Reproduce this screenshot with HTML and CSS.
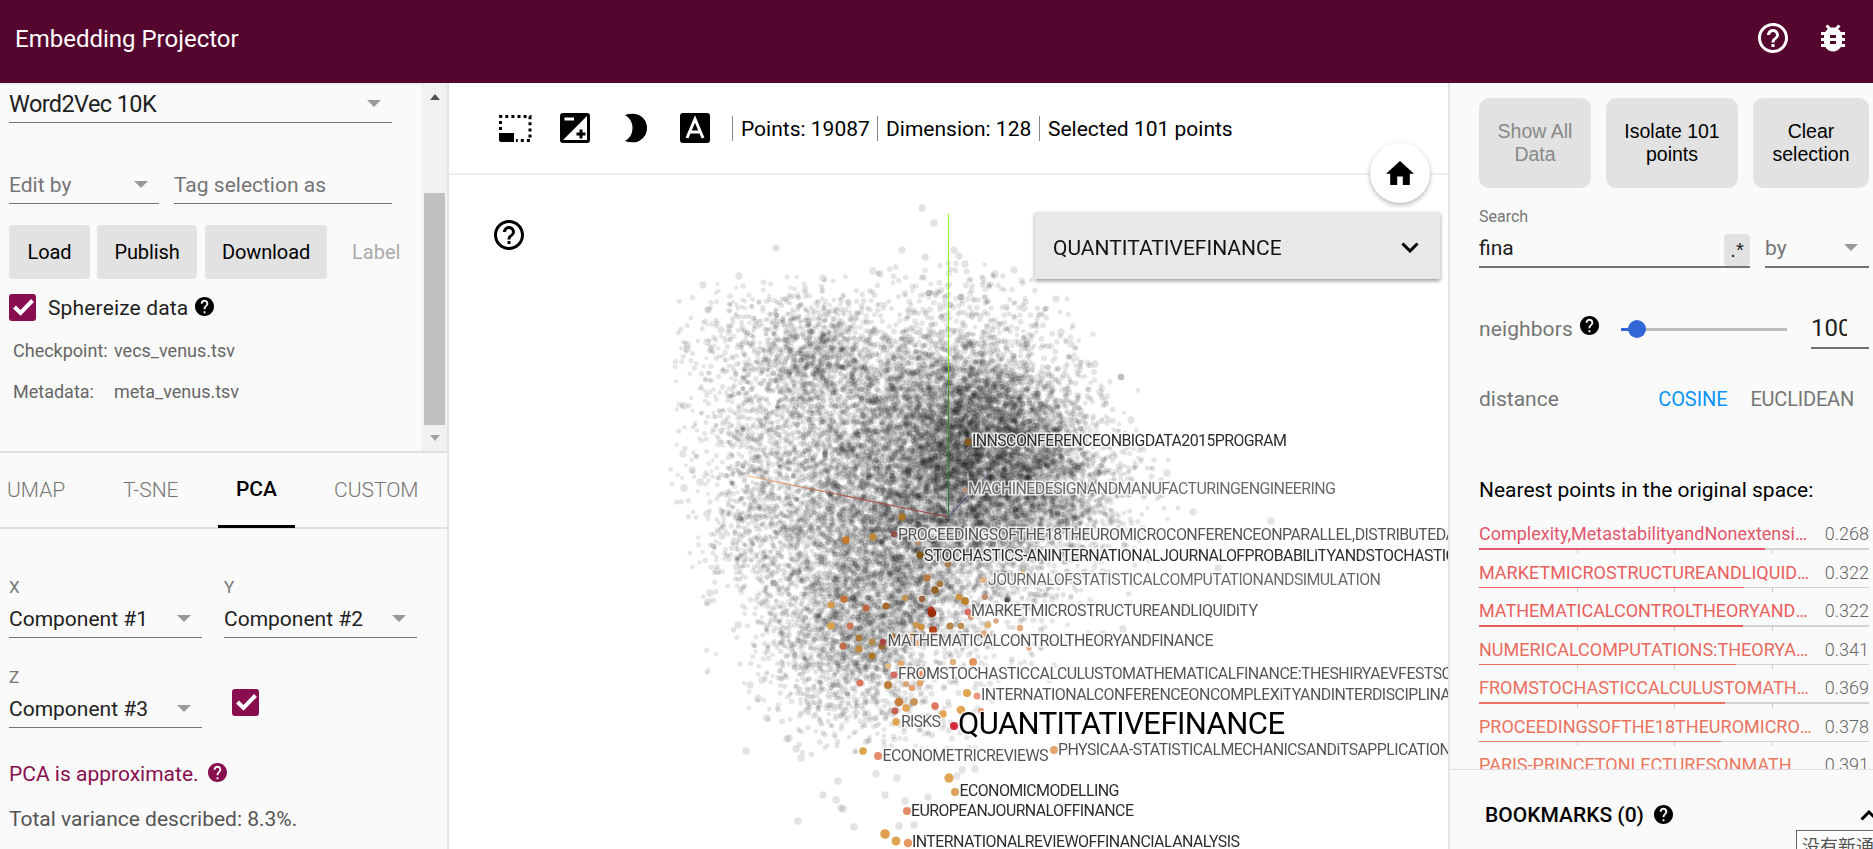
FILE: index.html
```html
<!DOCTYPE html>
<html lang="en">
<head>
<meta charset="utf-8">
<title>Embedding Projector</title>
<link rel="stylesheet" href="styles.css">
</head>
<body>
<svg class="defs" aria-hidden="true">
  <symbol id="help" viewBox="2 2 20 20"><path d="M12 2C6.48 2 2 6.48 2 12s4.48 10 10 10 10-4.48 10-10S17.52 2 12 2zm1 17h-2v-2h2v2zm2.07-7.75l-.9.92C13.45 12.9 13 13.5 13 15h-2v-.5c0-1.1.45-2.1 1.17-2.83l1.24-1.26c.37-.36.59-.86.59-1.41 0-1.1-.9-2-2-2s-2 .9-2 2H8c0-2.21 1.79-4 4-4s4 1.79 4 4c0 .88-.36 1.68-.93 2.25z"/></symbol>
  <symbol id="help-outline" viewBox="2 2 20 20"><path d="M11 18h2v-2h-2v2zm1-16C6.48 2 2 6.48 2 12s4.48 10 10 10 10-4.48 10-10S17.52 2 12 2zm0 18c-4.41 0-8-3.59-8-8s3.59-8 8-8 8 3.59 8 8-3.590 8-8 8zm0-14c-2.210 0-4 1.790-4 4h2c0-1.100.9-2 2-2s2 .9 2 2c0 2-3 1.750-3 5h2c0-2.250 3-2.500 3-5 0-2.210-1.790-4-4-4z"/></symbol>
  <symbol id="check" viewBox="0 0 27 27"><path d="M5.500 13l6 6L23.500 6.500" fill="none" stroke="#fff" stroke-width="4"/></symbol>
</svg>
<header class="header">
  <h1 class="title">Embedding Projector</h1>
  <svg class="i30"><use href="#help-outline"/></svg>
  <svg class="bug" viewBox="0 0 24 24"><path d="M20 8h-2.810c-.45-.78-1.070-1.450-1.820-1.960L17 4.410 15.590 3l-2.170 2.170C12.960 5.060 12.490 5 12 5c-.49 0-.96.06-1.410.17L8.410 3 7 4.410l1.620 1.630C7.880 6.550 7.260 7.220 6.810 8H4v2h2.090c-.05.33-.09.66-.09 1v1H4v2h2v1c0 .34.04.67.09 1H4v2h2.810c1.040 1.790 2.970 3 5.190 3s4.150-1.210 5.190-3H20v-2h-2.090c.05-.33.09-.66.09-1v-1h2v-2h-2v-1c0-.34-.04-.67-.09-1H20V8zm-6 8h-4v-2h4v2zm0-4h-4v-2h4v2z"/></svg>
</header>
<main class="main">
  <aside class="left">
    <section class="data-pane">
      <div class="data-content">
        <div class="field dataset"><span>Word2Vec 10K</span><i class="arrow"></i></div>
        <div class="edit-row">
          <div class="field edit-by"><span>Edit by</span><i class="arrow"></i></div>
          <div class="field tag-as"><span>Tag selection as</span></div>
        </div>
        <div class="actions">
          <button class="btn load">Load</button><button class="btn publish">Publish</button><button class="btn download">Download</button><span class="label-btn">Label</span>
        </div>
        <div class="sphere"><svg class="checkbox"><use href="#check"/></svg><span>Sphereize data</span><svg class="i19"><use href="#help"/></svg></div>
        <dl class="files"><dt>Checkpoint:</dt><dd>vecs_venus.tsv</dd><dt>Metadata:</dt><dd>meta_venus.tsv</dd></dl>
      </div>
      <div class="scrollbar"><i class="up"></i><div class="thumb"></div><i class="down"></i></div>
    </section>
    <nav class="tabs"><span class="tab umap">UMAP</span><span class="tab tsne">T-SNE</span><span class="tab pca">PCA</span><span class="tab custom">CUSTOM</span></nav>
    <section class="pca-pane">
      <div class="axes">
        <div class="axis"><label>X</label><div class="field"><span>Component #1</span><i class="arrow"></i></div></div>
        <div class="axis"><label>Y</label><div class="field"><span>Component #2</span><i class="arrow"></i></div></div>
        <div class="axis"><label>Z</label><div class="field"><span>Component #3</span><i class="arrow"></i></div></div>
        <svg class="checkbox z-check"><use href="#check"/></svg>
      </div>
      <p class="approx"><span>PCA is approximate.</span><svg class="i19"><use href="#help"/></svg></p>
      <p class="variance">Total variance described: 8.3%.</p>
    </section>
  </aside>
  <section class="center">
    <div class="toolbar">
      <svg class="tool select" viewBox="0 0 34 30"><path d="M1 20h15v9H3q-2 0-2-2z"/><path d="M2.500 17V3.500H32V27.500H18" fill="none" stroke="#000" stroke-width="3" stroke-dasharray="3 3.100"/></svg>
      <svg class="tool night" viewBox="0 0 30 30"><rect width="30" height="30" rx="3"/><path d="M27 3v24H3z" fill="#fff"/><path d="M4.500 6H14" stroke="#fff" stroke-width="3"/><path d="M16.500 21h9M21 16.500v9" stroke="#000" stroke-width="3"/></svg>
      <svg class="tool moon" viewBox="0 0 23 30"><path d="M0 1.500Q3.500 0 8 0a15 15 0 0 1 0 30Q3.500 30 0 28.500a15.500 15.500 0 0 0 0-27z"/></svg>
      <svg class="tool letter" viewBox="0 0 30 30"><rect width="30" height="30" rx="3"/><path d="M7 25L15 6l8 19M10 19h10" fill="none" stroke="#fff" stroke-width="3"/></svg>
      <div class="stats"><span class="s1">Points: 19087</span><span class="s2">Dimension: 128</span><span class="s3">Selected 101 points</span></div>
    </div>
    <div class="scene">
      <canvas id="plot" width="1000" height="674"></canvas>
      <svg class="labels" viewBox="449 175 1000 674" id="labels">
        <text x="972" y="446" textLength="315">INNSCONFERENCEONBIGDATA2015PROGRAM</text>
        <text x="968" y="494" textLength="368" class="dim">MACHINEDESIGNANDMANUFACTURINGENGINEERING</text>
        <text x="898" y="539.500" textLength="558" class="mid">PROCEEDINGSOFTHE18THEUROMICROCONFERENCEONPARALLEL,DISTRIBUTEDA</text>
        <text x="924" y="560.500" textLength="532">STOCHASTICS-ANINTERNATIONALJOURNALOFPROBABILITYANDSTOCHASTIC</text>
        <text x="988" y="584.500" textLength="393" class="dim">JOURNALOFSTATISTICALCOMPUTATIONANDSIMULATION</text>
        <text x="971" y="616" textLength="287" class="mid">MARKETMICROSTRUCTUREANDLIQUIDITY</text>
        <text x="887.500" y="646" textLength="326" class="mid">MATHEMATICALCONTROLTHEORYANDFINANCE</text>
        <text x="898" y="679" textLength="554" class="mid">FROMSTOCHASTICCALCULUSTOMATHEMATICALFINANCE:THESHIRYAEVFESTSC</text>
        <text x="981" y="700" textLength="470" class="mid">INTERNATIONALCONFERENCEONCOMPLEXITYANDINTERDISCIPLINA</text>
        <text x="901" y="727" textLength="40" class="mid">RISKS</text>
        <text x="958" y="734" textLength="327" class="big">QUANTITATIVEFINANCE</text>
        <text x="1058" y="755" textLength="393" class="mid">PHYSICAA-STATISTICALMECHANICSANDITSAPPLICATION</text>
        <text x="882.500" y="761" textLength="166" class="mid">ECONOMETRICREVIEWS</text>
        <text x="959.500" y="796" textLength="160">ECONOMICMODELLING</text>
        <text x="911" y="816" textLength="223">EUROPEANJOURNALOFFINANCE</text>
        <text x="912" y="847" textLength="328">INTERNATIONALREVIEWOFFINANCIALANALYSIS</text>
      </svg>
      <svg class="scene-help"><use href="#help-outline"/></svg>
      <div class="card"><span>QUANTITATIVEFINANCE</span><svg viewBox="0 0 18 11"><path d="M1.500 1.500L9 9l7.500-7.500" fill="none" stroke="#000" stroke-width="3"/></svg></div>
      <div class="home"><svg viewBox="2 3 20 17"><path d="M10 20v-6h4v6h5v-8h3L12 3 2 12h3v8z"/></svg></div>
    </div>
  </section>
  <aside class="right">
    <div class="inspector">
      <div class="sel-actions"><button class="big-btn off">Show All<br>Data</button><button class="big-btn">Isolate 101<br>points</button><button class="big-btn">Clear<br>selection</button></div>
      <label class="search-label">Search</label>
      <div class="search-row"><div class="field search"><span>fina</span><b class="regex">.*</b></div><div class="field by"><span>by</span><i class="arrow"></i></div></div>
      <div class="neighbors"><span>neighbors</span><svg class="i19"><use href="#help"/></svg><div class="slider"><i class="knob"></i></div><div class="num"><span>100</span></div></div>
      <div class="distance"><span>distance</span><span class="cosine">COSINE</span><span class="euclid">EUCLIDEAN</span></div>
      <h2 class="nearest">Nearest points in the original space:</h2>
      <div class="rows" id="rows"></div>
    </div>
    <div class="bookmarks"><span>BOOKMARKS (0)</span><svg class="i19"><use href="#help"/></svg><svg class="chev" viewBox="0 0 18 11"><path d="M1.500 9.500L9 2l7.500 7.500" fill="none" stroke="#000" stroke-width="3"/></svg></div>
    <div class="notice">没有新通知</div>
  </aside>
</main>
<script src="plot.js"></script>
</body>
</html>
```
FILE: styles.css
```css
* { box-sizing: border-box; }
body { margin: 0; width: 1873px; height: 849px; overflow: hidden; font-family: Roboto, "Noto Sans CJK SC", sans-serif; background: #fff; color: #212121; display: flex; flex-direction: column; }
h1, h2, p, dl, dd { margin: 0; font-weight: 400; }
svg { display: block; flex: none; }
button { border: 0; padding: 0; }
.defs { position: absolute; width: 0; height: 0; }
.header { height: 83px; flex: none; background: #55062f; color: #fff; display: flex; align-items: center; padding: 0 23px 7px 15px; }
.title { font-size: 24px; flex: 1; padding-top: 2px; }
.i30 { width: 30px; height: 30px; fill: #fff; margin-right: 27px; }
.bug { width: 36px; height: 36px; fill: #fff; margin-right: -1px; }
.i19 { width: 19px; height: 19px; }
.main { flex: 1; display: flex; min-height: 0; }
.left { width: 449px; flex: none; background: #fafafa; border-right: 2px solid #e4e4e4; }
.data-pane { height: 370px; display: flex; border-top: 2px solid #eee; border-bottom: 2px solid #e0e0e0; }
.data-content { flex: 1; padding-left: 9px; }
.scrollbar { width: 25px; background: #f1f1f1; display: flex; flex-direction: column; align-items: center; padding: 9px 0 10px; }
.up { border: 5.500px solid transparent; border-top: 0; border-bottom: 6px solid #505050; }
.down { border: 5.500px solid transparent; border-bottom: 0; border-top: 6px solid #a3a3a3; margin-top: 10px; }
.thumb { width: 21px; height: 232px; margin-top: 93px; background: #c1c1c1; }
.field { display: flex; align-items: center; justify-content: space-between; border-bottom: 1px solid #737373; height: 38px; font-size: 21px; padding-right: 11px; }
.arrow { width: 0; height: 0; border: 7px solid transparent; border-bottom: 0; border-top-color: #999; }
.dataset { width: 383px; font-size: 23.500px; letter-spacing: -.6px; }
.edit-row { display: flex; gap: 15px; padding-top: 43px; color: #757575; }
.edit-by { width: 150px; }
.tag-as { width: 218px; }
.actions { display: flex; margin-top: 21px; }
.btn { height: 54px; background: #e2e2e2; border-radius: 4px; font: 20px Roboto, sans-serif; letter-spacing: -.1px; color: #000; }
.load { width: 81px; } .publish { width: 100px; margin-left: 7px; } .download { width: 122px; margin-left: 8px; }
.label-btn { font-size: 20px; color: #aaa; margin: 15px 0 0 25px; }
.sphere { display: flex; align-items: center; margin-top: 15px; height: 27px; font-size: 21px; }
.sphere span { margin: 0 7px 0 12px; letter-spacing: .15px; }
.sphere .i19 { margin-bottom: 3px; }
.checkbox { width: 27px; height: 27px; border-radius: 3px; background: #880e4f; }
.files { display: grid; grid-template-columns: 101px auto; padding: 9px 0 0 4px; font-size: 18px; line-height: 41px; color: #666; }
.tabs { height: 76px; display: flex; border-bottom: 2px solid #e0e0e0; font-size: 21px; font-weight: 300; line-height: 75px; color: #757575; }
.umap { width: 116px; padding-left: 7px; } .tsne { width: 102px; padding-left: 7px; }
.pca { width: 77px; height: 75px; text-align: center; font-weight: 500; color: #000; border-bottom: 3px solid #000; line-height: 73px; }
.custom { padding-left: 39px; }
.axes { display: grid; grid-template-columns: 193px 193px; column-gap: 22px; padding: 46px 0 0 9px; }
.axis { height: 90px; }
.axis label { display: block; height: 25px; line-height: 25px; font-size: 17px; color: #757575; }
.z-check { margin: 24px 0 0 8px; }
.approx { display: flex; align-items: center; gap: 9px; color: #880e4f; font-size: 21px; height: 30px; margin: 4px 0 0 9px; fill: #880e4f; }
.approx .i19 { margin-bottom: 4px; }
.variance { font-size: 21px; line-height: 30px; color: #555; margin: 15px 0 0 9px; }
.center { width: 999px; flex: none; display: flex; flex-direction: column; }
.toolbar { height: 92px; border-bottom: 2px solid #eee; display: flex; align-items: center; padding: 0 0 0 49px; }
.tool { height: 30px; margin-bottom: 1px; }
.select { width: 34px; } .night { width: 30px; margin-left: 28px; } .moon { width: 22px; margin-left: 35px; } .letter { width: 30px; margin-left: 33px; }
.stats { display: flex; margin-left: 22px; font-size: 21px; color: #000; height: 25px; line-height: 27px; }
.stats span { border-left: 1.500px solid #888; padding-left: 8px; white-space: nowrap; }
.s1 { width: 145px; } .s2 { width: 162px; }
.scene { flex: 1; position: relative; min-height: 0; }
#plot, .labels { position: absolute; left: 0; top: 0; width: 1000px; height: 674px; }
.labels text { font-size: 16px; fill: #2c2c2c; stroke: #fff; stroke-opacity: .75; stroke-width: 3px; paint-order: stroke; }
.labels .mid { fill: #555; } .labels .dim { fill: #6a6a6a; } .labels .big { font-size: 31px; fill: #000; }
.scene-help { position: absolute; left: 45px; top: 45px; width: 30px; height: 30px; }
.card { position: absolute; left: 586px; top: 37px; width: 405px; height: 67px; background: #e8e8e8; box-shadow: 0 2px 4px rgba(0,0,0,.4); display: flex; align-items: center; justify-content: space-between; padding: 3px 21px 0 18px; font-size: 21px; color: #111; }
.card span { padding-top: 2px; }
.card svg { width: 18px; height: 11px; }
.home { position: absolute; left: 921px; top: -32px; width: 60px; height: 60px; border-radius: 50%; background: #fff; box-shadow: 0 2px 5px rgba(0,0,0,.3); display: flex; align-items: center; justify-content: center; }
.home svg { width: 28px; height: 24px; }
.right { flex: none; width: 425px; background: #fafafa; border-left: 2px solid #e4e4e4; position: relative; overflow: hidden; display: flex; flex-direction: column; }
.inspector { height: 687px; flex: none; overflow: hidden; padding: 15px 4px 0 29px; border-bottom: 1px solid #ddd; }
.sel-actions { display: grid; grid-template-columns: 112px 132px 116px; gap: 15px; }
.big-btn { height: 90px; border-radius: 10px; background: #e2e2e2; color: #000; font: 19.500px/23px "Liberation Sans", sans-serif; }
.off { color: #888; }
.search-label { display: block; height: 24px; margin-top: 17px; line-height: 24px; font-size: 16px; color: #757575; }
.search-row { display: flex; gap: 15px; }
.search-row .field { border-bottom-width: 2px; height: 39px; }
.search { width: 271px; padding-right: 0 !important; }
.regex { width: 26px; height: 32px; margin-top: 5px; background: #e2e2e2; border-radius: 4px; font: 20px/33px "Liberation Sans", sans-serif; text-align: center; }
.by { width: 104px; color: #757575; }
.neighbors { height: 80px; margin-top: 21px; display: flex; align-items: center; font-size: 21px; color: #757575; }
.neighbors .i19 { margin: 0 22px 7px 8px; fill: #000; }
.neighbors > span { width: 93px; letter-spacing: .1px; }
.slider { width: 166px; height: 3px; background: linear-gradient(90deg, #3367d6 10px, #bdbdbd 10px); display: flex; align-items: center; }
.slider, .num { flex: none; }
.knob { width: 18px; height: 18px; border-radius: 50%; background: #3367d6; margin-left: 7px; }
.num { margin-left: 24px; width: 58px; height: 40px; border-bottom: 2px solid #737373; font-size: 24px; line-height: 38px; color: #212121; }
.num span { display: block; width: 36px; overflow: hidden; }
.distance { display: flex; height: 30px; margin-top: 15px; line-height: 30px; font-size: 21px; color: #757575; }
.cosine { font-size: 20px; letter-spacing: -.1px; color: #0d94f5; margin-left: auto; margin-right: 23px; }
.euclid { font-size: 20px; letter-spacing: -.2px; margin-right: 15px; }
.nearest { font-size: 21px; line-height: 30px; margin-top: 61px; color: #000; }
.rows { padding-top: 10px; }
.row { height: 38.500px; }
.row-text { display: flex; justify-content: space-between; height: 33px; line-height: 37px; font-size: 18px; }
.row-name { width: 333px; white-space: nowrap; overflow: hidden; text-overflow: ellipsis; }
.row-val { color: #666; font-weight: 300; }
.track { height: 1.500px; background: #d3d3d3; }
.bar { height: 1.500px; }
.ticks { display: grid; grid-template-columns: repeat(4, 97.500px); height: 4px; }
.ticks i + i { border-left: 1px solid #ccc; }
.bookmarks { flex: 1; display: flex; align-items: center; padding: 11px 0 0 35px; font-size: 21px; font-weight: 500; color: #000; white-space: nowrap; }
.bookmarks .i19 { margin: 0 0 2px 10px; }
.chev { width: 18px; height: 11px; margin-left: 187px; }
.notice { position: absolute; left: 346px; top: 747px; width: 100px; height: 40px; border: 1px solid #666; background: #fff; padding: 2px 0 0 5px; font: 18px/24px "Noto Sans CJK SC", sans-serif; color: #555; white-space: nowrap; }
```
FILE: plot.js
```js
// Nearest-neighbour rows
const neighbors = [
  ['Complexity,MetastabilityandNonextensivity', '0.268', 286, '#e2556a'],
  ['MARKETMICROSTRUCTUREANDLIQUIDITY', '0.322', 265, '#ea605e'],
  ['MATHEMATICALCONTROLTHEORYANDFINANCE', '0.322', 264, '#ea605e'],
  ['NUMERICALCOMPUTATIONS:THEORYANDALGORITHMS', '0.341', 257, '#ea6a60'],
  ['FROMSTOCHASTICCALCULUSTOMATHEMATICALFINANCE', '0.369', 246, '#ea705f'],
  ['PROCEEDINGSOFTHE18THEUROMICROCONFERENCE', '0.378', 242, '#ea735f'],
  ['PARIS-PRINCETONLECTURESONMATHWORKSHOP', '0.391', 238, '#ea7860']
];
document.getElementById('rows').innerHTML = neighbors.map(([n, v, w, c]) =>
  `<div class="row"><div class="row-text"><span class="row-name" style="color:${c}">${n}</span><span class="row-val">${v}</span></div><div class="track"><div class="bar" style="width:${w}px;background:${c}"></div></div><div class="ticks"><i></i><i></i><i></i><i></i></div></div>`).join('');

// Point cloud
const ctx = document.getElementById('plot').getContext('2d');
ctx.translate(-449, -175);
let seed = 7;
function rnd() {
  seed = (seed + 0x6D2B79F5) | 0;
  let t = Math.imul(seed ^ (seed >>> 15), 1 | seed);
  t = (t + Math.imul(t ^ (t >>> 7), 61 | t)) ^ t;
  return ((t ^ (t >>> 14)) >>> 0) / 4294967296;
}
function dot(x, y, r, color) { ctx.fillStyle = color; ctx.beginPath(); ctx.arc(x, y, r, 0, 7); ctx.fill(); }

// Density of the projected words: 30px columns from x=670, 25px rows from y=260
const density = `
0 0 0 0 0 0 0 0 0 0 0 0 0 0 0 0 0 0
0 0 .2 .3 .4 .3 .2 .3 .6 .6 .6 .5 .1 0 0 0 0 0
0 .2 .4 1 1.5 1.5 1 .7 .8 .7 .8 .8 .5 .2 0 0 0 0
0 .4 1 1.8 3.2 3.5 2.5 1.3 1.5 1.4 1.5 1.3 1 .5 .2 0 0 0
.1 .5 1.2 2 4 5 3.5 2.4 3 3 3.5 2.5 1.5 .8 .3 0 0 0
0 .5 1.4 2 3.2 3.6 3.4 4 4.5 5 5.5 5 4 1.5 .6 0 0 0
0 .4 1.3 2.4 2.8 3 3.5 5 6 7.5 8 7 6 3 1 .2 0 0
.1 .5 1.6 2.8 2.4 3 4 5 6 9 9.5 9 7.5 5 2 .5 .1 0
.1 .5 1.4 2.4 3 3 4 5.5 7 9.5 10 9 8 6 3 1 .2 0
.1 .4 1.5 2.4 2.5 3.2 4 5.5 6.5 8 8.5 8 7 5.500 3.5 1.2 .3 0
0 .2 1.5 2.5 2.7 3.2 4 5 6 7 7 7 6.5 5.5 3 1 .3 0
0 .1 1.3 2.7 3 3.5 4 5 5.5 5.5 5 5 4 3 1.5 .6 .2 0
0 .1 .8 2 3 3.8 4.2 5 5.500 4 3 3 2 1.5 1 .3 0 0
0 0 .4 1.2 2.4 3.500 4.5 5 5 3.5 2 2 1.5 1 .4 .1 0 0
0 0 .2 .8 2 3.2 4.5 5 4.500 2.500 1.2 1 .7 .4 .1 0 0 0
0 0 .1 .5 2 3.5 4.500 4.5 3 1.500 .8 .6 .4 .2 0 0 0 0
0 0 .1 .3 1.8 3 3.500 3.2 2.200 1.2 .5 .4 .3 .1 0 0 0 0
0 0 0 .2 1 2 2.200 2 1.200 .8 .4 .2 0 0 0 0 0 0
0 0 0 .1 .5 1.2 1.700 1.4 .8 .5 .2 0 0 0 0 0 0 0
0 0 0 0 .1 .3 .5 .6 .5 .2 .1 0 0 0 0 0 0 0
0 0 0 0 0 .1 .1 .1 0 0 0 0 0 0 0 0 0 0`.trim().split('\n').map(r => r.split(' ').map(Number));
for (let n = 0; n < 15800;) {
  const u = rnd() * 17, v = rnd() * 20, i = Math.floor(u), j = Math.floor(v), a = u - i, b = v - j;
  const d = (density[j][i] * (1 - a) + density[j][i + 1] * a) * (1 - b) + (density[j + 1][i] * (1 - a) + density[j + 1][i + 1] * a) * b;
  if (rnd() * 10 > d) continue;
  const far = Math.min(1, Math.abs(u / 17 - .55) * .8 + (d < 3 ? .15 : 0));
  dot(670 + u * 30, 260 + v * 25, 3.3 - far - rnd() * .7, 'rgba(0,0,0,.1)');
  n++;
}

// Isolated points around the edge of the cloud
[[922,208],[934,223],[776,248],[902,250],[925,257],[954,250],[959,256],[965,264],[739,276],[873,271],[880,274],[1014,270],[995,274],[703,285],[823,278],[708,310],[1056,299],[1024,308],[721,330],[687,345],[687,349],[707,342],[1061,332],[1071,344],[1095,364],[1100,392],[684,406],[1131,420],[683,454],[692,470],[684,488],[700,482],[707,514],[722,536],[717,571],[710,593],[708,602],[737,567],[738,625],[750,685],[762,680],[758,698],[767,718],[746,751],[789,738],[787,739],[796,749],[801,758],[838,781],[823,795],[836,800],[841,808],[843,809],[854,827],[798,821],[899,826],[914,825],[876,774],[897,778],[885,795],[905,801],[928,797],[957,776],[962,770],[975,769],[1271,521],[1218,568],[1103,634],[1193,512],[1167,473],[1123,629]].forEach(([x,y]) => dot(x,y,3.7,'rgba(0,0,0,.11)'));
[[929,293],[1121,377],[1027,344],[774,583],[1008,599],[961,297]].forEach(([x,y]) => dot(x,y,3.3,'rgba(0,0,0,.25)'));

// Axes
function line(x1, y1, x2, y2, stroke, w) { ctx.strokeStyle = stroke; ctx.lineWidth = w; ctx.beginPath(); ctx.moveTo(x1, y1); ctx.lineTo(x2, y2); ctx.stroke(); }
let g = ctx.createLinearGradient(0, 214, 0, 517);
g.addColorStop(0, '#8cff1a'); g.addColorStop(.48, '#7ee81c'); g.addColorStop(.6, '#398f22'); g.addColorStop(1, '#257d28');
line(948.5, 214, 948.5, 517, g, 1);
g = ctx.createLinearGradient(748, 0, 948, 0);
g.addColorStop(0, '#ffb978'); g.addColorStop(.5, '#b44b38'); g.addColorStop(1, '#963838');
line(748, 476, 948, 517, g, 1);
line(948, 517, 987, 476, '#4a4a91', 1);

// Highlighted neighbours: x, y, radius, colour
const O = '#c77b26', L = '#e0a552', P = '#e68a68', S = '#bd6845', D = '#84591f';
[[968,442,3.5,D],[965,490,2.5,'#b98e72'],[902,517,3.7,'#a77526'],[846,540,3.7,O],[873,537,3.7,'#bd873c'],[894,534,3.3,'#94514c'],[918,542,3,'#bd8c68'],[920,555,3.7,'#7d571f'],[948,564,3.4,'#a77e4e'],[927,578,3.7,'#b67a45'],[940,584,3.3,'#aa783e'],[935,590,3.7,'#94621f'],[983,580,3,'#e6b181'],[1023,572,2,L],[905,598,3,'#c69452'],[922,599,3.2,'#9f6240'],[959,597,3.5,'#c99447'],[965,601,4,'#bf802d'],[985,597,3,'#c08b6a'],[1007,600,2.6,'#5a4642'],[831,605,3.5,'#d29b4e'],[844,599,3.7,'#c5743d'],[866,608,3.5,S],[886,606,3.5,'#a96828'],[931,610,3.5,'#b32'],[932,613,4.3,'#9c2b0b'],[968,612,3.5,'#db6a69'],[971,617,3,'#d79672'],[831,626,3.8,'#daa24b'],[850,626,3.4,'#ce7559'],[916,625,3.3,'#c79952'],[921,627,3.5,'#d09042'],[950,626,3.5,'#b38a4c'],[961,626,3.3,'#bd8e50'],[988,625,3.3,'#dfb36d'],[996,621,2.8,'#dda58a'],[1020,628,3.2,'#e3ae7b'],[933,630,4,'#b5421b'],[859,638,3.6,'#a87834'],[892,636,3,'#a76a24'],[912,635,3.4,'#e5a65c'],[984,634,3.5,'#dda77f'],[843,646,3.5,'#c36a45'],[859,649,3.8,'#c18b40'],[872,642,3.4,'#b28b4a'],[882,646,3.6,'#9a6c34'],[883,642,3.3,'#ab464b'],[872,656,3.5,'#a97530'],[917,643,3,'#e39e73'],[973,662,4,'#df965e'],[953,662,3.2,'#dfb17d'],[1029,648,2.7,'#e6aa8d'],[888,666,3,'#dfbc86'],[901,664,3.5,'#e4a668'],[921,674,3.3,'#e99370'],[894,675,3.4,'#d26962'],[860,683,3.5,'#da765c'],[888,685,4,'#bb7e37'],[906,684,3,'#d7a774'],[920,683,3.4,'#e1a66b'],[912,688,3.3,'#e2a172'],[967,693,4,L],[977,696,3.5,'#e99580'],[899,702,4.4,'#c5803f'],[914,702,3.8,'#c79353'],[906,708,3.8,L],[935,706,3.7,'#df765e'],[895,711,3.4,'#c75f55'],[961,710,4.3,L],[943,714,3.7,'#e5a253'],[896,722,3.7,L],[954,726,4,'#d62a3a'],[981,711,3,P],[863,751,3.8,'#dda44d'],[878,756,3.9,P],[1054,750,4,'#e6a56c'],[949,778,4.7,L],[955,792,4,'#dfa058'],[907,811,4,P],[885,834,4.8,'#e19d50'],[896,841,4.5,L],[908,843,4.3,'#e79660']].forEach(d => dot(...d));
```
